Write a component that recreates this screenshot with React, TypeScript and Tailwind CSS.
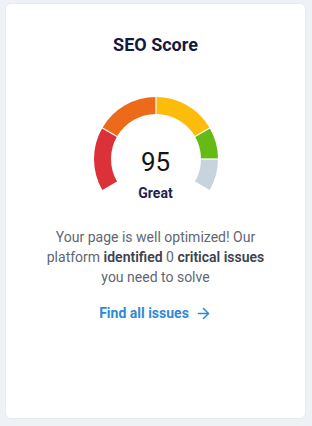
import { ArrowRight } from 'lucide-react';

const CX = 66;
const CY = 64;
const R = 53.5;

const point = (deg: number, r: number) => {
  const a = (deg * Math.PI) / 180;
  return [CX + r * Math.sin(a), CY - r * Math.cos(a)];
};

const arc = (from: number, to: number) => {
  const [x1, y1] = point(from, R);
  const [x2, y2] = point(to, R);
  return `M ${x1.toFixed(2)} ${y1.toFixed(2)} A ${R} ${R} 0 0 1 ${x2.toFixed(2)} ${y2.toFixed(2)}`;
};

const segments = [
  { from: -120, to: -60, color: '#dc3138' },
  { from: -60, to: 0, color: '#ee6a1b' },
  { from: 0, to: 60, color: '#fdbb0c' },
  { from: 60, to: 90, color: '#66ba15' },
  { from: 90, to: 120, color: '#c7d4dd' },
];

const Gauge = () => (
  <div className="relative w-[132px] h-[100px]">
    <svg width="132" height="100" viewBox="0 0 132 100">
      {segments.map((s) => (
        <path key={s.from} d={arc(s.from, s.to)} stroke={s.color} strokeWidth="17" fill="none" />
      ))}
      {[-60, 0, 60, 90].map((deg) => {
        const [x1, y1] = point(deg, R - 10);
        const [x2, y2] = point(deg, R + 10);
        return <line key={deg} x1={x1} y1={y1} x2={x2} y2={y2} stroke="#ffffff" strokeWidth="1.2" />;
      })}
    </svg>
    <div className="absolute left-0 right-0 top-[52px] text-center text-[26px] leading-[30px] text-[#141414]">
      95
    </div>
    <div className="absolute left-0 right-0 top-[89px] text-center text-[14px] leading-[18px] font-bold text-[#1e244f]">
      Great
    </div>
  </div>
);

export default function App() {
  return (
    <div className="w-[312px] h-[426px] bg-[#eef2f6] pt-[3px] pl-[5px]" style={{ fontFamily: 'Roboto, "Noto Sans", sans-serif' }}>
      <div className="w-[301px] h-[416px] bg-white rounded-md border border-[#e6ebf0] flex flex-col items-center pt-[29px]">
        <h2 className="text-[18px] leading-[24px] font-bold text-[#131a3f]">SEO Score</h2>
        <div className="mt-[38px]">
          <Gauge />
        </div>
        <p className="mt-[32px] w-[240px] text-center text-[14px] leading-[20px] text-[#5f6673]">
          Your page is well optimized! Our platform{' '}
          <span className="font-semibold text-[#3b4250]">identified</span> 0{' '}
          <span className="font-semibold text-[#3b4250]">critical issues</span> you need to solve
        </p>
        <button className="mt-[16px] flex items-center gap-[6px] text-[14px] leading-[20px] font-bold text-[#2f8ad9]">
          Find all issues
          <ArrowRight size={17} strokeWidth={2.2} />
        </button>
      </div>
    </div>
  );
}
